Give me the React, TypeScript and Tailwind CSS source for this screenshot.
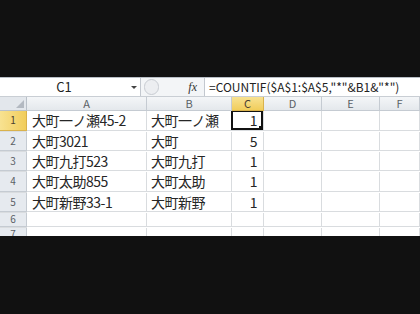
import React from 'react';

const cols = ['A', 'B', 'C', 'D', 'E', 'F'];

const rows: { n: number; a: string; b: string; c: string; h: string }[] = [
  { n: 1, a: '大町一ノ瀬45-2', b: '大町一ノ瀬', c: '1', h: 'h-[21px]' },
  { n: 2, a: '大町3021', b: '大町', c: '5', h: 'h-[20px]' },
  { n: 3, a: '大町九打523', b: '大町九打', c: '1', h: 'h-[20px]' },
  { n: 4, a: '大町太助855', b: '大町太助', c: '1', h: 'h-[21px]' },
  { n: 5, a: '大町新野33-1', b: '大町新野', c: '1', h: 'h-[20px]' },
  { n: 6, a: '', b: '', c: '', h: 'h-[15px]' },
  { n: 7, a: '', b: '', c: '', h: 'h-[15px]' },
];

const grid = 'grid grid-cols-[27px_120px_85px_32px_58px_58px_1fr]';
const cell = 'border-r border-b border-[#d9dcdf] whitespace-nowrap';

export default function App() {
  return (
    <div
      className="w-[420px] h-[314px] bg-[#111111] flex flex-col overflow-hidden"
      style={{ fontFamily: '"Noto Sans CJK JP", "Noto Sans", sans-serif' }}
    >
      <div className="h-[77px] shrink-0" />

      <div className="h-[159px] shrink-0 overflow-hidden bg-white">
        {/* formula bar */}
        <div className="h-[20px] flex bg-white border-t border-[#b8bec6] border-b border-b-[#c9ced4] text-[#222]">
          <div className="w-[141px] flex items-center relative border-r border-[#c3c8cf]">
            <span className="w-[128px] text-center text-[13px] leading-[18px]">C1</span>
            <span className="absolute right-[3px] top-[8px] w-0 h-0 border-l-[3px] border-r-[3px] border-t-[3px] border-l-transparent border-r-transparent border-t-[#444]" />
          </div>
          <div className="w-[64px] flex items-center bg-[#f3f5f7] border-r border-[#c3c8cf]">
            <div className="ml-[3px] w-[15px] h-[16px] rounded-full border border-[#c8ccd2] bg-[#eceef1]" />
            <span
              className="ml-auto mr-[7px] text-[12px] italic leading-[18px] text-[#333]"
              style={{ fontFamily: '"Liberation Serif", serif' }}
            >
              fx
            </span>
          </div>
          <div className="flex-1 flex items-center pl-[4px] text-[12px] leading-[18px] whitespace-nowrap overflow-hidden">
            =COUNTIF($A$1:$A$5,"*"&amp;B1&amp;"*")
          </div>
        </div>

        {/* column headers */}
        <div className={`${grid} h-[14px] text-[11px] leading-[13px] text-[#5a5f66]`}>
          <div className="relative bg-[#e3e7ec] border-r border-b border-[#b9c0c8]">
            <svg className="absolute right-[2px] bottom-[2px]" width="8" height="8" viewBox="0 0 8 8">
              <polygon points="8,0 8,8 0,8" fill="#b3b9c1" />
            </svg>
          </div>
          {cols.map((c) => (
            <div
              key={c}
              className={`flex items-center justify-center border-r border-b ${
                c === 'C'
                  ? 'bg-gradient-to-b from-[#f8e291] to-[#f1cd5a] border-[#d9b24c] text-[#4a4030]'
                  : 'bg-gradient-to-b from-[#f4f6f8] to-[#e4e8ec] border-[#c5cbd2]'
              }`}
            >
              {c}
            </div>
          ))}
          <div className="bg-gradient-to-b from-[#f4f6f8] to-[#e4e8ec] border-b border-[#c5cbd2]" />
        </div>

        {/* rows */}
        {rows.map((r) => (
          <div
            key={r.n}
            className={`${grid} ${r.h} overflow-hidden bg-white text-[14px] leading-[18px] tracking-[-0.5px] text-[#262626]`}
          >
            <div
              className={`flex items-center justify-center text-[10px] leading-[12px] tracking-normal border-r border-b ${
                r.n === 1
                  ? 'bg-gradient-to-r from-[#f8e291] to-[#f1cd5a] border-[#d9b24c] text-[#4a4030]'
                  : 'bg-[#e6eaef] border-[#c5cbd2] text-[#5a5f66]'
              }`}
            >
              {r.n}
            </div>
            <div className={`${cell} flex items-center pl-[5px]`}>{r.a}</div>
            <div className={`${cell} flex items-center pl-[4px]`}>{r.b}</div>
            <div className={`${cell} flex items-center justify-end pr-[6px] relative`}>
              {r.c}
              {r.n === 1 && (
                <>
                  <span className="absolute -left-px -top-px right-0 bottom-0 border-2 border-[#111]" />
                  <span className="absolute right-0 bottom-0 w-[4px] h-[4px] bg-[#111]" />
                </>
              )}
            </div>
            <div className={cell} />
            <div className={cell} />
            <div className={cell} />
            <div className="border-b border-[#d9dcdf]" />
          </div>
        ))}
      </div>

      <div className="flex-1" />
    </div>
  );
}
